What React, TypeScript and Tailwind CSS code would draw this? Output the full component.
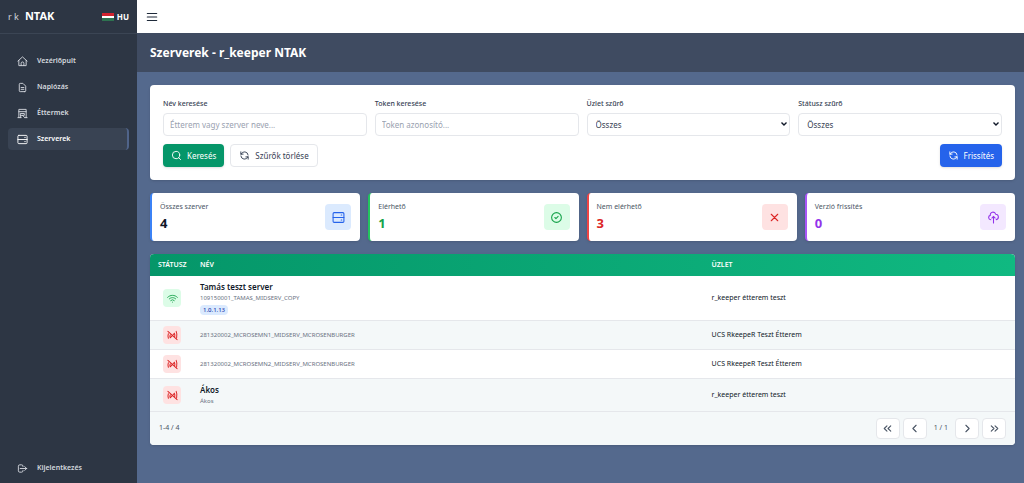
import type { ReactNode } from "react";
import {
  HiOutlineDocumentText,
  HiOutlineLogout,
  HiOutlineWifi,
  HiOutlineRefresh,
  HiOutlineCloudUpload,
  HiOutlineCheckCircle,
  HiOutlineX,
} from "react-icons/hi";
import {
  LuSearch,
  LuMenu,
  LuChevronsLeft,
  LuChevronLeft,
  LuChevronRight,
  LuChevronsRight,
} from "react-icons/lu";

function Icon({ children }: { children: ReactNode }) {
  return (
    <svg
      viewBox="0 0 24 24"
      width="1em"
      height="1em"
      fill="none"
      stroke="currentColor"
      strokeWidth="2"
      strokeLinecap="round"
      strokeLinejoin="round"
    >
      {children}
    </svg>
  );
}

const HomeIcon = () => (
  <Icon>
    <path d="M2 11 12 2l10 9M4 9.500V21h16V9.500M9 21v-5a3 3 0 0 1 6 0v5" />
  </Icon>
);

const StoreIcon = () => (
  <Icon>
    <path d="M4 21V3h16v18M2 21h7M17 21h5M4 8h16M8 12h8v4H8zM8 16v5M12 16l5 5" />
  </Icon>
);

const ServerIcon = () => (
  <Icon>
    <rect x="2" y="3" width="20" height="18" rx="2" />
    <path d="M2 12h20M17 7.500h1M17 16.500h1" />
  </Icon>
);

const OfflineIcon = () => (
  <Icon>
    <path
      strokeWidth="2.200"
      d="M2 3l20 18M20 3c2 4 2 9 1 14M16 7c1 2 1.500 4 1 7M16 7l-3 4M3 8c-1 3-1 7 0 10M7 11c-1 2-1 4 0 6l4-4"
    />
  </Icon>
);

const menu = [
  { label: "Vezérlőpult", icon: <HomeIcon /> },
  { label: "Naplózás", icon: <HiOutlineDocumentText /> },
  { label: "Éttermek", icon: <StoreIcon /> },
  { label: "Szerverek", icon: <ServerIcon />, active: true },
];

const servers = [
  {
    name: "Tamás teszt server",
    code: "109150001_TAMAS_MIDSERV_COPY",
    version: "1.0.1.13",
    shop: "r_keeper étterem teszt",
    online: true,
  },
  {
    code: "281320002_MCROSEMN1_MIDSERV_MCROSENBURGER",
    shop: "UCS RkeepeR Teszt Étterem",
  },
  {
    code: "281320002_MCROSEMN2_MIDSERV_MCROSENBURGER",
    shop: "UCS RkeepeR Teszt Étterem",
  },
  { name: "Ákos", code: "Ákos", shop: "r_keeper étterem teszt" },
];

function Sidebar() {
  return (
    <aside className="w-[137px] shrink-0 bg-[#2d3644] flex flex-col text-[#d5d9df]">
      <div className="h-[34px] border-b border-[#3b4554] px-2 flex items-center">
        <span className="text-[9px] text-gray-300">r k</span>
        <span className="ml-[6px] text-[11px] font-bold text-white">NTAK</span>
        <button className="ml-auto flex items-center gap-[3px] text-[8px] font-bold text-white">
          <svg viewBox="0 0 12 8" className="w-3 h-2">
            <path fill="#d2232f" d="M0 0h12v3H0z" />
            <path fill="#fff" d="M0 3h12v2H0z" />
            <path fill="#2e7250" d="M0 5h12v3H0z" />
          </svg>
          HU
        </button>
      </div>
      <nav className="flex flex-col gap-1 px-2 pt-4 text-[7px] font-semibold">
        {menu.map((item) => (
          <a
            key={item.label}
            href="#"
            className={
              item.active
                ? "h-[22px] pl-[9px] flex items-center gap-[9px] rounded-sm bg-[#394353] border-r-2 border-[#50648a] text-white"
                : "h-[22px] pl-[9px] flex items-center gap-[9px]"
            }
          >
            <span className="text-[11px]">{item.icon}</span>
            {item.label}
          </a>
        ))}
      </nav>
      <a
        href="#"
        className="mt-auto mb-1 h-[22px] pl-[17px] flex items-center gap-[9px] text-[7px] font-semibold"
      >
        <HiOutlineLogout className="size-[11px]" />
        Kijelentkezés
      </a>
    </aside>
  );
}

const control =
  "block w-full h-[23px] rounded border border-gray-200 bg-white text-[8px] text-gray-700 placeholder:text-gray-400";

function Field({ id, label, children }: { id: string; label: string; children: ReactNode }) {
  return (
    <div className="flex flex-col gap-[3px]">
      <label htmlFor={id} className="text-[7px] leading-3 font-medium text-gray-700">
        {label}
      </label>
      {children}
    </div>
  );
}

function Select({ id }: { id: string }) {
  return (
    <div className="relative">
      <select id={id} className={`${control} appearance-none pl-2 pr-3`}>
        <option>Összes</option>
      </select>
      <svg
        viewBox="0 0 6 4"
        className="absolute right-[3px] top-[9px] w-[6px] h-1 pointer-events-none text-gray-900"
        fill="none"
        stroke="currentColor"
        strokeWidth="1.400"
      >
        <path d="M.5.5 3 3 5.500.5" />
      </svg>
    </div>
  );
}

function Filters() {
  return (
    <form className="bg-white rounded p-[13px] shadow">
      <div className="grid grid-cols-4 gap-2">
        <Field id="name" label="Név keresése">
          <input id="name" className={`${control} px-[6px]`} placeholder="Étterem vagy szerver neve..." />
        </Field>
        <Field id="token" label="Token keresése">
          <input id="token" className={`${control} px-[6px]`} placeholder="Token azonosító..." />
        </Field>
        <Field id="shop" label="Üzlet szűrő">
          <Select id="shop" />
        </Field>
        <Field id="status" label="Státusz szűrő">
          <Select id="status" />
        </Field>
      </div>
      <div className="mt-2 flex gap-[6px] text-[8px]">
        <button
          type="button"
          className="h-[23px] px-2 flex items-center gap-[5px] rounded bg-[#059669] text-white shadow"
        >
          <LuSearch className="size-[11px]" />
          Keresés
        </button>
        <button
          type="button"
          className="h-[23px] px-2 flex items-center gap-[5px] rounded border border-gray-200 text-gray-700"
        >
          <HiOutlineRefresh className="size-[11px]" />
          Szűrők törlése
        </button>
        <button
          type="button"
          className="ml-auto h-[23px] px-2 flex items-center gap-[5px] rounded bg-[#2563eb] text-white shadow"
        >
          <HiOutlineRefresh className="size-[11px]" />
          Frissítés
        </button>
      </div>
    </form>
  );
}

const stats = [
  {
    label: "Összes szerver",
    value: 4,
    border: "border-[#3b82f6]",
    text: "text-gray-900",
    box: "bg-[#dbeafe] text-[#2563eb]",
    icon: <ServerIcon />,
  },
  {
    label: "Elérhető",
    value: 1,
    border: "border-[#22c55e]",
    text: "text-[#16a34a]",
    box: "bg-[#dcfce7] text-[#16a34a]",
    icon: <HiOutlineCheckCircle />,
  },
  {
    label: "Nem elérhető",
    value: 3,
    border: "border-[#ef4444]",
    text: "text-[#dc2626]",
    box: "bg-[#fee2e2] text-[#dc2626]",
    icon: <HiOutlineX />,
  },
  {
    label: "Verzió frissítés",
    value: 0,
    border: "border-[#a855f7]",
    text: "text-[#9333ea]",
    box: "bg-[#f3e8ff] text-[#9333ea]",
    icon: <HiOutlineCloudUpload />,
  },
];

function Stats() {
  return (
    <div className="grid grid-cols-4 gap-2">
      {stats.map((s) => (
        <div
          key={s.label}
          className={`h-12 bg-white rounded shadow border-l-2 ${s.border} pl-2 pr-[9px] flex items-center justify-between`}
        >
          <div>
            <p className="text-[7px] leading-3 text-gray-600">{s.label}</p>
            <p className={`text-[13px] leading-5 font-bold ${s.text}`}>{s.value}</p>
          </div>
          <div className={`size-[26px] rounded flex items-center justify-center text-[13px] ${s.box}`}>
            {s.icon}
          </div>
        </div>
      ))}
    </div>
  );
}

function PageButton({ label, children }: { label: string; children: ReactNode }) {
  return (
    <button
      aria-label={label}
      className="w-6 h-[21px] rounded border border-gray-200 bg-white flex items-center justify-center text-[13px]"
    >
      {children}
    </button>
  );
}

function ServerTable() {
  return (
    <div className="rounded overflow-hidden bg-white shadow">
      <table className="w-full table-fixed text-left text-[7px]">
        <thead>
          <tr className="h-[22px] bg-linear-to-r from-[#059669] to-[#10b981] text-white uppercase">
            <th className="w-[42px] pl-2 font-semibold">Státusz</th>
            <th className="pl-2 font-semibold">Név</th>
            <th className="w-[36%] pl-2 font-semibold">Üzlet</th>
          </tr>
        </thead>
        <tbody>
          {servers.map((s, i) => (
            <tr key={i} className="h-[29px] border-b border-gray-200 even:bg-[#f4f8f9]">
              <td className="pl-[13px]">
                <div
                  className={`size-[18px] rounded flex items-center justify-center text-[11px] ${
                    s.online ? "bg-[#dcfce7] text-[#16a34a]" : "bg-[#fee2e2] text-[#dc2626]"
                  }`}
                >
                  {s.online ? <HiOutlineWifi /> : <OfflineIcon />}
                </div>
              </td>
              <td className="pl-2 py-[5px]">
                {s.name && <p className="text-[8px] leading-3 font-semibold text-gray-900">{s.name}</p>}
                <p className="text-[6px] leading-[10px] text-gray-500">{s.code}</p>
                {s.version && (
                  <p className="mt-[2px] w-fit px-[3px] text-[6px] leading-[10px] font-medium rounded-sm bg-[#dbeafe] text-[#1e40af]">
                    {s.version}
                  </p>
                )}
              </td>
              <td className="pl-2 text-gray-900">{s.shop}</td>
            </tr>
          ))}
        </tbody>
      </table>
      <div className="h-[33px] bg-[#f4f8f9] px-[9px] flex items-center justify-between text-[7px] text-gray-600">
        <span>1-4 / 4</span>
        <div className="flex items-center gap-[3px]">
          <PageButton label="Első oldal">
            <LuChevronsLeft />
          </PageButton>
          <PageButton label="Előző oldal">
            <LuChevronLeft />
          </PageButton>
          <span className="px-1">1 / 1</span>
          <PageButton label="Következő oldal">
            <LuChevronRight />
          </PageButton>
          <PageButton label="Utolsó oldal">
            <LuChevronsRight />
          </PageButton>
        </div>
      </div>
    </div>
  );
}

export default function App() {
  return (
    <div className="min-h-screen flex bg-[#54698d] font-['Noto_Sans','Open_Sans',sans-serif]">
      <Sidebar />
      <div className="flex-1 min-w-0">
        <header className="h-[33px] bg-white px-2 flex items-center">
          <button aria-label="Menü" className="text-gray-800">
            <LuMenu className="size-[14px]" />
          </button>
        </header>
        <div className="h-[39px] bg-[#3f4b61] px-[13px] flex items-center">
          <h1 className="text-[12px] font-bold text-white">Szerverek - r_keeper NTAK</h1>
        </div>
        <main className="pl-[13px] pr-[9px] py-[13px] flex flex-col gap-[13px]">
          <Filters />
          <Stats />
          <ServerTable />
        </main>
      </div>
    </div>
  );
}
